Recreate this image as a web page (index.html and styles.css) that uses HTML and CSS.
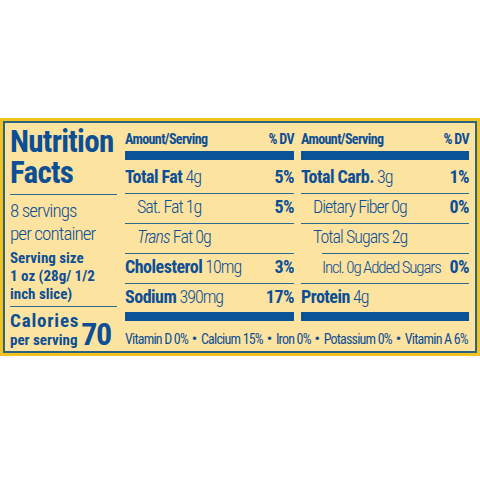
FILE: index.html
```html
<!DOCTYPE html>
<html lang="en">
<head>
<meta charset="utf-8">
<title>Nutrition Facts</title>
<link rel="stylesheet" href="styles.css">
</head>
<body>
<div class="label">
  <div class="inner">
    <div class="left">
      <h1 class="title"><span class="tline">Nutrition</span><span class="tline">Facts</span></h1>
      <div class="rule"></div>
      <p class="servings">8 servings<br>per container</p>
      <p class="size">Serving size<br>1 oz (28g/ 1/2<br>inch slice)</p>
      <div class="rule rule2"></div>
      <div class="cal">
        <div class="cal-text"><span class="cal-big">Calories</span><span class="cal-small">per serving</span></div>
        <span class="cal-num">70</span>
      </div>
    </div>
    <div class="table">
      <div class="col">
        <div class="head"><span>Amount/Serving</span><span>% DV</span></div>
        <div class="bar"></div>
        <div class="row first"><span><b>Total Fat</b> 4g</span><b>5%</b></div>
        <div class="row sub"><span>Sat. Fat 1g</span><b>5%</b></div>
        <div class="row sub"><span><i>Trans</i> Fat 0g</span></div>
        <div class="row"><span><b>Cholesterol</b> 10mg</span><b>3%</b></div>
        <div class="row last"><span><b>Sodium</b> 390mg</span><b>17%</b></div>
        <div class="bar"></div>
      </div>
      <div class="col">
        <div class="head"><span>Amount/Serving</span><span>% DV</span></div>
        <div class="bar"></div>
        <div class="row first"><span><b>Total Carb.</b> 3g</span><b>1%</b></div>
        <div class="row sub"><span>Dietary Fiber 0g</span><b>0%</b></div>
        <div class="row sugars"><span>Total Sugars 2g</span></div>
        <div class="row sub2"><span class="tight">Incl. 0g Added Sugars</span><b>0%</b></div>
        <div class="row last"><span><b>Protein</b> 4g</span></div>
        <div class="bar"></div>
      </div>
      <div class="vitamins">
        <span>Vitamin D 0%</span><span class="dot">•</span>
        <span>Calcium 15%</span><span class="dot">•</span>
        <span>Iron 0%</span><span class="dot">•</span>
        <span>Potassium 0%</span><span class="dot">•</span>
        <span>Vitamin A 6%</span>
      </div>
    </div>
  </div>
</div>
</body>
</html>
```
FILE: styles.css
```css
* { box-sizing: border-box; }
html, body { margin: 0; padding: 0; background: #ffffff; }
body {
  font-family: "Roboto Condensed", "Open Sans", "Liberation Sans", sans-serif;
  color: #0c4f95;
}
.label {
  margin-top: 118px;
  width: 480px;
  border: 3px solid #f2c21e;
}
.inner {
  border: 2px solid #2a6480;
  background: #fde3a0;
  height: 232px;
  display: flex;
  padding: 0 6px 0 5px;
}
.left {
  width: 107px;
  flex: none;
}
.title {
  margin: 0;
  padding-top: 3px;
  font-size: 31px;
  line-height: 31px;
  font-weight: 700;
  letter-spacing: -0.7px;
  display: flex;
  flex-direction: column;
}
.tline { display: block; height: 31px; }
.rule {
  height: 1px;
  background: #2a6a93;
  margin-top: 6px;
}
.rule2 { margin-top: 3px; }
.servings {
  margin: 4px 0 0;
  font-size: 19px;
  line-height: 23px;
  font-weight: 300;
  letter-spacing: -0.9px;
  white-space: nowrap;
}
.size {
  margin: 4px 0 0;
  font-size: 15px;
  line-height: 18px;
  font-weight: 700;
  white-space: nowrap;
}
.cal {
  display: flex;
  align-items: flex-end;
  gap: 2px;
  margin-top: 4px;
}
.cal-text { display: flex; flex-direction: column; }
.cal-big {
  font-size: 19px;
  line-height: 20px;
  font-weight: 700;
  letter-spacing: 0.8px;
}
.cal-small {
  font-size: 15px;
  line-height: 18px;
  font-weight: 700;
}
.cal-num {
  font-size: 32px;
  line-height: 32px;
  font-weight: 700;
  letter-spacing: -1.5px;
  margin-bottom: -1px;
}
.table {
  margin-left: 8px;
  display: grid;
  grid-template-columns: 169px 168px;
  column-gap: 7px;
  align-content: start;
}
.col { display: flex; flex-direction: column; }
.head {
  height: 28px;
  display: flex;
  justify-content: space-between;
  align-items: flex-end;
  padding-bottom: 5px;
  font-size: 14px;
  line-height: 14px;
  font-weight: 700;
  letter-spacing: -0.6px;
}
.bar {
  height: 9px;
  background: #0b5397;
}
.row {
  height: 30px;
  border-bottom: 1px solid #2a6a93;
  display: flex;
  justify-content: space-between;
  align-items: flex-start;
  font-size: 18px;
  line-height: 26px;
  font-weight: 300;
  letter-spacing: -1px;
  white-space: nowrap;
}
.row b { font-weight: 700; letter-spacing: -0.5px; }
.row i { font-style: italic; }
.row.first { height: 34px; padding-top: 4px; }
.row.last { height: 28px; border-bottom: none; }
.row.sub { padding-left: 12px; }
.row.sugars { margin-left: 21px; }
.row.sugars span { margin-left: -9px; }
.row.sub2 { padding-left: 21px; }
.row .tight { font-size: 17px; letter-spacing: -1.2px; }
.vitamins {
  grid-column: 1 / -1;
  display: flex;
  justify-content: space-between;
  align-items: baseline;
  padding: 9px 1px 0 0;
  font-size: 14px;
  line-height: 18px;
  font-weight: 400;
  letter-spacing: -0.8px;
  white-space: nowrap;
}
.dot { font-size: 15px; font-weight: 700; letter-spacing: 0; }
```
